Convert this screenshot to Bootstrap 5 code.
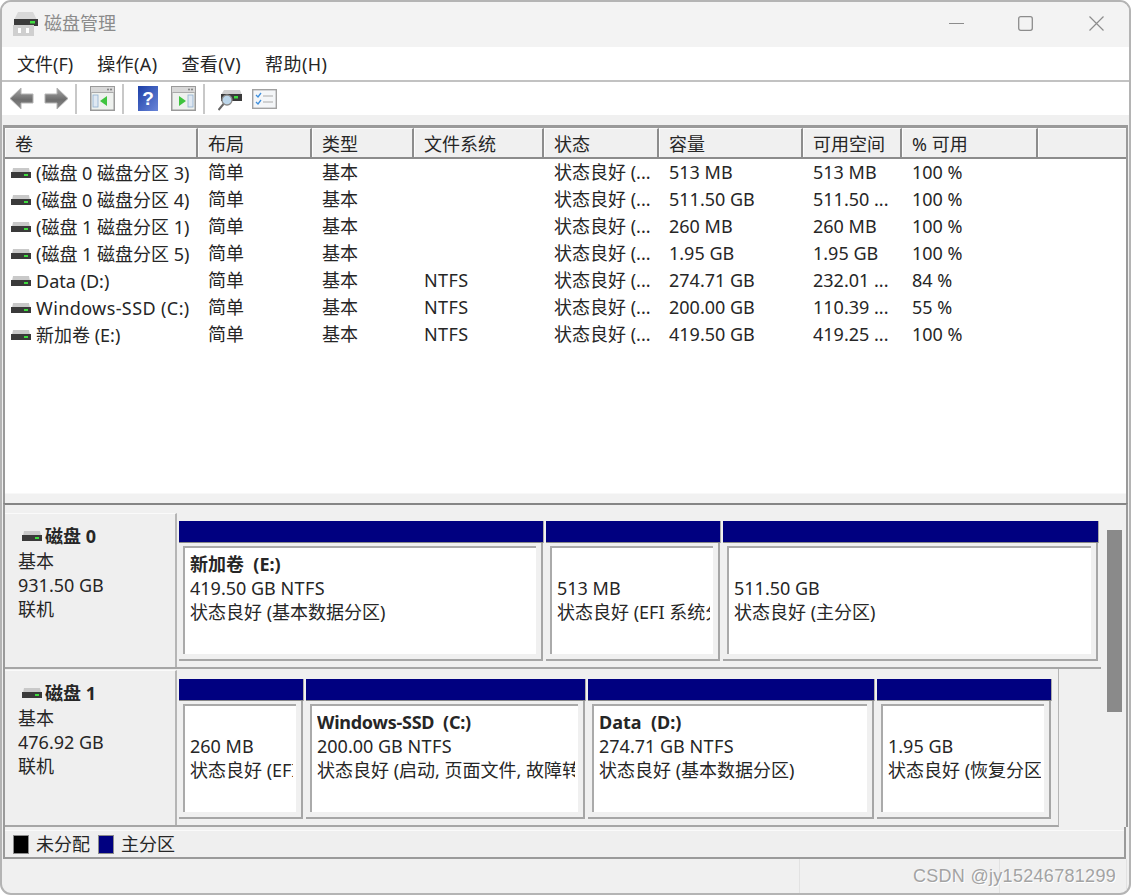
<!DOCTYPE html>
<html lang="zh-CN">
<head>
<meta charset="utf-8">
<title>磁盘管理</title>
<link href="https://cdn.jsdelivr.net/npm/bootstrap@5.3.0/dist/css/bootstrap.min.css" rel="stylesheet">
<style>
html,body{margin:0;background:#fff;overflow:hidden}
body{font-family:"Noto Sans","Noto Sans CJK SC",sans-serif;font-size:18px;line-height:24px;color:#262626}
.svgdefs{position:absolute;width:0;height:0}
.win{width:1131px;height:895px;border:2px solid #b4b4b4;border-radius:11px;background:#f0f0f0;overflow:hidden}
.titlebar{height:45px;background:#f3f3f3;color:#8b8b8b;padding-bottom:3px}
.titlebar .ttl{margin-left:6px}
.appicon{margin-left:11px;margin-top:2px}
.ctl{margin-right:25px;gap:54px}
.ctl .cx{margin-left:2px}
.menubar{height:35px;background:#fff;border-bottom:2px solid #c2c2c2;padding-left:15px;gap:24px}
.mi-w{letter-spacing:.4px}
.toolbar{height:33px;background:#fff;padding-left:7px}
.tsep{width:2px;height:30px;background:#c8c8c8}
.g6{margin-left:6px}.g7{margin-left:7px}.g10{margin-left:10px}.g13{margin-left:13px}.g14{margin-left:14px}
.spacer10{height:10px}
.listpane{margin:0 1px 0 1px;border:solid #9a9a9a;border-width:3px 2px 0 2px;background:#fff}
.lhead{height:31px;background:#f0f0f0;border-bottom:2px solid #8c8c8c}
.hc{flex:none;padding:3px 0 0 9px;border:solid #fbfbfb;border-width:1px 0 0 1px;border-right:2px solid #8c8c8c}
.c1{width:193px}.c2{width:114px}.c3{width:102px}.c4{width:130px}.c5{width:115px}.c6{width:144px}.c7{width:99px}.c8{width:136px}
.hc.c9{flex:1;border-right:0}
.lbody{height:334px;background:#fff}
.lrow{height:27px;line-height:26px;white-space:nowrap}
.dc{flex:none;padding-left:10px;overflow:hidden}
.dc.c1{padding-left:6px;display:flex;align-items:center;gap:5px}
.lat-w{letter-spacing:.4px}
.lstrip{height:10px;background:#f1f1f1;border-top:1px solid #f8f8f8}
.lower{margin:0 1px 0 1px;border-left:2px solid #9a9a9a;border-right:2px solid #9a9a9a;border-top:2px solid #858585;height:324px}
.disks{flex:1;min-width:0;background:#f0f0f0}
.drow.r1{width:1097px;height:164px;padding-top:8px;border-bottom:2px solid #a6a6a6}
.drow.r2{width:1054px;height:158px;padding-top:1px;border-bottom:2px solid #a6a6a6;border-right:1px solid #b5b5b5}
.dlabel{width:172px;flex:none;background:#efefef;border-top:1px solid #fafafa;border-right:2px solid #b5b5b5;padding:10px 0 0 13px}
.dname{font-weight:700;margin:0 0 1px 4px;gap:3px}
.segs{padding-left:2px;gap:3px}
.r1 .segs{padding-top:8px}
.r2 .segs{padding-top:9px}
.seg{flex:none}
.sbar{height:22px;background:#000080;border-bottom:1px solid #8a8a8a;box-shadow:1px 0 0 #aaa}
.sbody{height:118px;padding:3px 5px 5px 4px;background:#f0f0f0;border-right:2px solid #a6a6a6;border-bottom:2px solid #a6a6a6}
.sinner{height:100%;background:#fff;border-top:2px solid #aaa;border-left:2px solid #aaa;padding:4px 3px 0 5px}
.sclip{overflow:hidden;white-space:nowrap}
.sclip b{font-weight:700}
.lat-n{letter-spacing:-.25px}
.w364{width:364px}.w174{width:174px}.w375{width:375px}
.w124{width:124px}.w279{width:279px}.w286{width:286px}.w175{width:174px}
.sbtrack{width:25px;flex:none;padding:25px 2px 0 6px;background:#f0f0f0}
.sbthumb{height:182px;width:15px;background:#8a8a8a}
.legend{height:32px;margin:0 3px 0 1px;border:solid #9a9a9a;border-width:0 2px 2px 2px;background:#efefef;padding:4px 0 0 8px;box-shadow:inset 0 3px 0 #f0f0f0,inset 0 4px 0 #fafafa}
.sw{width:16px;height:19px;margin-right:7px;border:1px solid #8c8c8c}
.swk{background:#000}.swn{background:#000080;margin-left:8px}
.stat{height:34px;position:relative}
.stat .scell{height:100%;border-left:1px solid #e2e2e2}
.scell.s1{width:200px}.scell.s2{width:127px}.scell.s3{width:3px}
.wm{position:absolute;right:13px;top:5px;font-family:"Liberation Sans",sans-serif;font-size:18px;letter-spacing:.3px;color:#a3a3a3;text-shadow:1px 1px 0 #fff;white-space:nowrap}
</style>
</head>
<body>
<svg class="svgdefs">
<defs>
<linearGradient id="dg" x1="0" y1="0" x2="0" y2="1"><stop offset="0" stop-color="#d8d8d8"/><stop offset=".45" stop-color="#9a9a9a"/><stop offset=".5" stop-color="#2e2e2e"/><stop offset="1" stop-color="#4a4a4a"/></linearGradient>
<linearGradient id="ag" x1="0" y1="0" x2="0" y2="1"><stop offset="0" stop-color="#a8a8a8"/><stop offset=".55" stop-color="#6e6e6e"/><stop offset="1" stop-color="#8c8c8c"/></linearGradient>
<linearGradient id="hg" x1="0" y1="0" x2="1" y2="1"><stop offset="0" stop-color="#1c3fa8"/><stop offset="1" stop-color="#6a86d8"/></linearGradient>
<symbol id="hdd" viewBox="0 0 20 12"><path d="M2 1h16l1 5H1z" fill="#c9c9c9"/><rect x="0" y="5" width="20" height="6" fill="#3a3a3a"/><rect x="13" y="7" width="4" height="2" fill="#3fdc3f"/></symbol>
<symbol id="win" viewBox="0 0 25 25"><rect x=".75" y=".75" width="23.5" height="23.5" fill="#eef1ee" stroke="#9a9a9a" stroke-width="1.5"/><rect x="1" y="1" width="23" height="5" fill="#d8d8d8"/><circle cx="18" cy="3.5" r=".9" fill="#777"/><circle cx="21" cy="3.5" r=".9" fill="#777"/><rect x="1.500" y="6" width="22" height="1" fill="#aaa"/></symbol>
</defs>
</svg>
<div class="win d-flex flex-column">
  <div class="titlebar d-flex align-items-center">
    <svg class="appicon" width="25" height="24" viewBox="0 0 25 24"><path d="M5 0h15l4 8H1z" fill="#d9d9d9"/><rect x="1" y="7" width="24" height="7" fill="#3b3b3b"/><rect x="17" y="9" width="5" height="2.500" fill="#3fdc3f"/><rect x="0" y="13" width="21" height="11" fill="#cfcfcf"/><rect x="5" y="16" width="3" height="5" fill="#fff"/><rect x="13" y="16" width="3" height="5" fill="#fff"/></svg>
    <span class="ttl">磁盘管理</span>
    <div class="ms-auto d-flex align-items-center ctl">
      <svg width="15" height="15" viewBox="0 0 15 15"><path d="M0 7.500h15" stroke="#8c8c8c" stroke-width="1.200"/></svg>
      <svg width="15" height="15" viewBox="0 0 15 15"><rect x=".7" y=".7" width="13.600" height="13.600" rx="2" fill="none" stroke="#8c8c8c" stroke-width="1.300"/></svg>
      <svg class="cx" width="15" height="15" viewBox="0 0 15 15"><path d="M.5.5l14 14M14.500.5l-14 14" stroke="#8c8c8c" stroke-width="1.200"/></svg>
    </div>
  </div>
  <div class="menubar d-flex align-items-center">
    <span>文件(F)</span><span class="mi-w">操作(A)</span><span class="mi-w">查看(V)</span><span class="mi-w">帮助(H)</span>
  </div>
  <div class="toolbar d-flex align-items-center">
    <svg width="25" height="23" viewBox="0 0 25 23"><path d="M12 1L1 11.500 12 22v-6h12V7H12z" fill="url(#ag)" stroke="#b4b4b4"/></svg>
    <svg width="25" height="23" viewBox="0 0 25 23" class="g10"><path d="M13 1l11 10.500L13 22v-6H1V7h12z" fill="url(#ag)" stroke="#b4b4b4"/></svg>
    <span class="tsep g6"></span>
    <svg width="25" height="25" viewBox="0 0 25 25" class="g13"><use href="#win"/><rect x="3" y="9" width="5" height="12" fill="#dfe8f2" stroke="#8fb0d0" stroke-width=".8"/><path d="M17 10v10l-7-5z" fill="#3fc43f"/></svg>
    <span class="tsep g7"></span>
    <svg width="20" height="25" viewBox="0 0 20 25" class="g14"><rect width="20" height="25" fill="url(#hg)"/><text x="10" y="19" text-anchor="middle" font-family="Liberation Sans" font-size="19" font-weight="700" fill="#fff">?</text></svg>
    <svg width="25" height="25" viewBox="0 0 25 25" class="g13"><use href="#win"/><rect x="17" y="9" width="5" height="12" fill="#dfe8f2" stroke="#8fb0d0" stroke-width=".8"/><path d="M8 10v10l7-5z" fill="#3fc43f"/></svg>
    <span class="tsep g7"></span>
    <svg width="24" height="24" viewBox="0 0 24 24" class="g13"><path d="M6 3h16l2 5H3z" fill="#cfcfcf"/><rect x="3" y="7" width="21" height="7" fill="#3a3a3a"/><rect x="16" y="9" width="4" height="2.500" fill="#3fdc3f"/><circle cx="9" cy="13" r="5" fill="#bcd6ea" stroke="#8a8a8a" stroke-width="1.300"/><path d="M5.500 17L.5 23" stroke="#666" stroke-width="2"/></svg>
    <svg width="25" height="20" viewBox="0 0 25 20" class="g10"><rect x=".7" y=".7" width="23.600" height="18.600" fill="#f4f6f8" stroke="#a2a2a2" stroke-width="1.400"/><path d="M4 6l2 2 3-4M4 13l2 2 3-4" fill="none" stroke="#3f8fdc" stroke-width="1.300"/><path d="M11 7h10M11 13h10" stroke="#aaa" stroke-width="1.200"/></svg>
  </div>
  <div class="spacer10"></div>
  <div class="listpane">
    <div class="lhead d-flex">
      <div class="hc c1">卷</div><div class="hc c2">布局</div><div class="hc c3">类型</div><div class="hc c4">文件系统</div><div class="hc c5">状态</div><div class="hc c6">容量</div><div class="hc c7">可用空间</div><div class="hc c8">% 可用</div><div class="hc c9"></div>
    </div>
    <div class="lbody">
      <div class="lrow d-flex"><div class="dc c1"><svg width="20" height="12"><use href="#hdd"/></svg><span>(磁盘 0 磁盘分区 3)</span></div><div class="dc c2">简单</div><div class="dc c3">基本</div><div class="dc c4"></div><div class="dc c5">状态良好 (...</div><div class="dc c6">513 MB</div><div class="dc c7">513 MB</div><div class="dc c8">100 %</div></div>
      <div class="lrow d-flex"><div class="dc c1"><svg width="20" height="12"><use href="#hdd"/></svg><span>(磁盘 0 磁盘分区 4)</span></div><div class="dc c2">简单</div><div class="dc c3">基本</div><div class="dc c4"></div><div class="dc c5">状态良好 (...</div><div class="dc c6">511.50 GB</div><div class="dc c7">511.50 ...</div><div class="dc c8">100 %</div></div>
      <div class="lrow d-flex"><div class="dc c1"><svg width="20" height="12"><use href="#hdd"/></svg><span>(磁盘 1 磁盘分区 1)</span></div><div class="dc c2">简单</div><div class="dc c3">基本</div><div class="dc c4"></div><div class="dc c5">状态良好 (...</div><div class="dc c6">260 MB</div><div class="dc c7">260 MB</div><div class="dc c8">100 %</div></div>
      <div class="lrow d-flex"><div class="dc c1"><svg width="20" height="12"><use href="#hdd"/></svg><span>(磁盘 1 磁盘分区 5)</span></div><div class="dc c2">简单</div><div class="dc c3">基本</div><div class="dc c4"></div><div class="dc c5">状态良好 (...</div><div class="dc c6">1.95 GB</div><div class="dc c7">1.95 GB</div><div class="dc c8">100 %</div></div>
      <div class="lrow d-flex"><div class="dc c1"><svg width="20" height="12"><use href="#hdd"/></svg><span>Data (D:)</span></div><div class="dc c2">简单</div><div class="dc c3">基本</div><div class="dc c4 lat-w">NTFS</div><div class="dc c5">状态良好 (...</div><div class="dc c6">274.71 GB</div><div class="dc c7">232.01 ...</div><div class="dc c8">84 %</div></div>
      <div class="lrow d-flex"><div class="dc c1"><svg width="20" height="12"><use href="#hdd"/></svg><span class="lat-w">Windows-SSD (C:)</span></div><div class="dc c2">简单</div><div class="dc c3">基本</div><div class="dc c4 lat-w">NTFS</div><div class="dc c5">状态良好 (...</div><div class="dc c6">200.00 GB</div><div class="dc c7">110.39 ...</div><div class="dc c8">55 %</div></div>
      <div class="lrow d-flex"><div class="dc c1"><svg width="20" height="12"><use href="#hdd"/></svg><span>新加卷 (E:)</span></div><div class="dc c2">简单</div><div class="dc c3">基本</div><div class="dc c4 lat-w">NTFS</div><div class="dc c5">状态良好 (...</div><div class="dc c6">419.50 GB</div><div class="dc c7">419.25 ...</div><div class="dc c8">100 %</div></div>
    </div>
    <div class="lstrip"></div>
  </div>
  <div class="lower d-flex">
    <div class="disks">
      <div class="drow r1 d-flex">
        <div class="dlabel">
          <div class="dname d-flex align-items-center"><svg width="20" height="12"><use href="#hdd"/></svg><span>磁盘 0</span></div>
          <div>基本</div><div>931.50 GB</div><div>联机</div>
        </div>
        <div class="segs d-flex">
          <div class="seg w364"><div class="sbar"></div><div class="sbody"><div class="sinner"><div class="sclip"><b>新加卷&nbsp; (E:)</b><br>419.50 GB <span class="lat-w">NTFS</span><br>状态良好 (基本数据分区)</div></div></div></div>
          <div class="seg w174"><div class="sbar"></div><div class="sbody"><div class="sinner"><div class="sclip">&nbsp;<br>513 MB<br>状态良好 (EFI 系统分区)</div></div></div></div>
          <div class="seg w375"><div class="sbar"></div><div class="sbody"><div class="sinner"><div class="sclip">&nbsp;<br>511.50 GB<br>状态良好 (主分区)</div></div></div></div>
        </div>
      </div>
      <div class="drow r2 d-flex">
        <div class="dlabel">
          <div class="dname d-flex align-items-center"><svg width="20" height="12"><use href="#hdd"/></svg><span>磁盘 1</span></div>
          <div>基本</div><div>476.92 GB</div><div>联机</div>
        </div>
        <div class="segs d-flex">
          <div class="seg w124"><div class="sbar"></div><div class="sbody"><div class="sinner"><div class="sclip">&nbsp;<br>260 MB<br>状态良好 (EFI 系统分区)</div></div></div></div>
          <div class="seg w279"><div class="sbar"></div><div class="sbody"><div class="sinner"><div class="sclip"><b class="lat-n">Windows-SSD&nbsp; (C:)</b><br>200.00 GB <span class="lat-w">NTFS</span><br>状态良好 (启动, 页面文件, 故障转储, 基本数据分区)</div></div></div></div>
          <div class="seg w286"><div class="sbar"></div><div class="sbody"><div class="sinner"><div class="sclip"><b>Data&nbsp; (D:)</b><br>274.71 GB <span class="lat-w">NTFS</span><br>状态良好 (基本数据分区)</div></div></div></div>
          <div class="seg w175"><div class="sbar"></div><div class="sbody"><div class="sinner"><div class="sclip">&nbsp;<br>1.95 GB<br>状态良好 (恢复分区)</div></div></div></div>
        </div>
      </div>
    </div>
    <div class="sbtrack"><div class="sbthumb"></div></div>
  </div>
  <div class="legend d-flex align-items-center">
    <span class="sw swk"></span><span>未分配</span><span class="sw swn"></span><span>主分区</span>
  </div>
  <div class="stat d-flex justify-content-end">
    <span class="scell s1"></span><span class="scell s2"></span><span class="scell s3"></span>
    <span class="wm">CSDN @jy15246781299</span>
  </div>
</div>
</body>
</html>
